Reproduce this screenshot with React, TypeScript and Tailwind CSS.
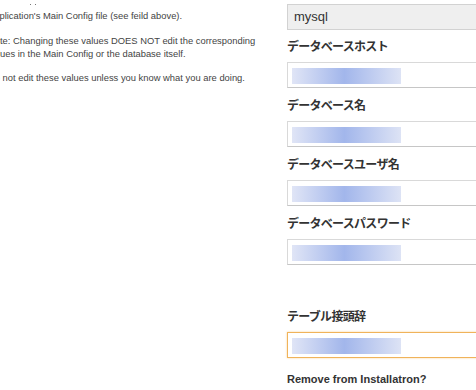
import React from 'react';

const Blur = () => (
  <div className="h-4 w-[109px] bg-[linear-gradient(to_right,#e0e5f6,#a2b6eb_48%,#dde3f5)]" />
);

const Field = ({ label, first, focused }: { label: string; first?: boolean; focused?: boolean }) => (
  <div>
    <div
      className={`${first ? 'mt-[9px]' : 'mt-[10px]'} h-4 text-[12px] font-bold leading-4 tracking-[-0.06em] text-[#333]`}
    >
      {label}
    </div>
    <div
      className={
        focused
          ? 'mt-[7px] h-[26px] border border-[#f0b35a] bg-white py-[5px] pl-[4px] shadow-[0_0_2px_#f8d49c]'
          : 'mt-[7px] h-[26px] border border-[#d9d9d9] border-b-[#c6c6c6] bg-white py-[5px] pl-[4px]'
      }
    >
      <Blur />
    </div>
  </div>
);

export default function App() {
  return (
    <div className="flex h-[390px] w-[476px] overflow-hidden bg-white font-['Liberation_Sans','Noto_Sans_CJK_JP',sans-serif]">
      <div className="-ml-[12px] w-[299px] shrink-0 whitespace-nowrap text-[9.4px] leading-[13px] text-[#444]">
        <div className="flex h-[8px] items-center gap-[4px] pl-[42px]">
          <span className="h-[1px] w-[1px] bg-[#777]" />
          <span className="h-[1px] w-[1px] bg-[#777]" />
        </div>
        <p className="mb-[12px] mt-[1px]">Application's Main Config file (see feild above).</p>
        <p className="mb-[11px]">
          Note: Changing these values DOES NOT edit the corresponding
          <br />
          values in the Main Config or the database itself.
        </p>
        <p>Do not edit these values unless you know what you are doing.</p>
      </div>

      <div className="w-[220px] shrink-0 pt-[4px]">
        <div className="h-[26px] border border-[#d2d2d2] bg-[#efefef] pl-[6px] text-[13px] leading-[24px] text-[#333]">
          mysql
        </div>
        <Field label="データベースホスト" first />
        <Field label="データベース名" />
        <Field label="データベースユーザ名" />
        <Field label="データベースパスワード" />
        <div className="h-[34px]" />
        <Field label="テーブル接頭辞" focused />
        <div className="mt-[13px] text-[11px] font-bold leading-4 text-[#333]">Remove from Installatron?</div>
      </div>
    </div>
  );
}
